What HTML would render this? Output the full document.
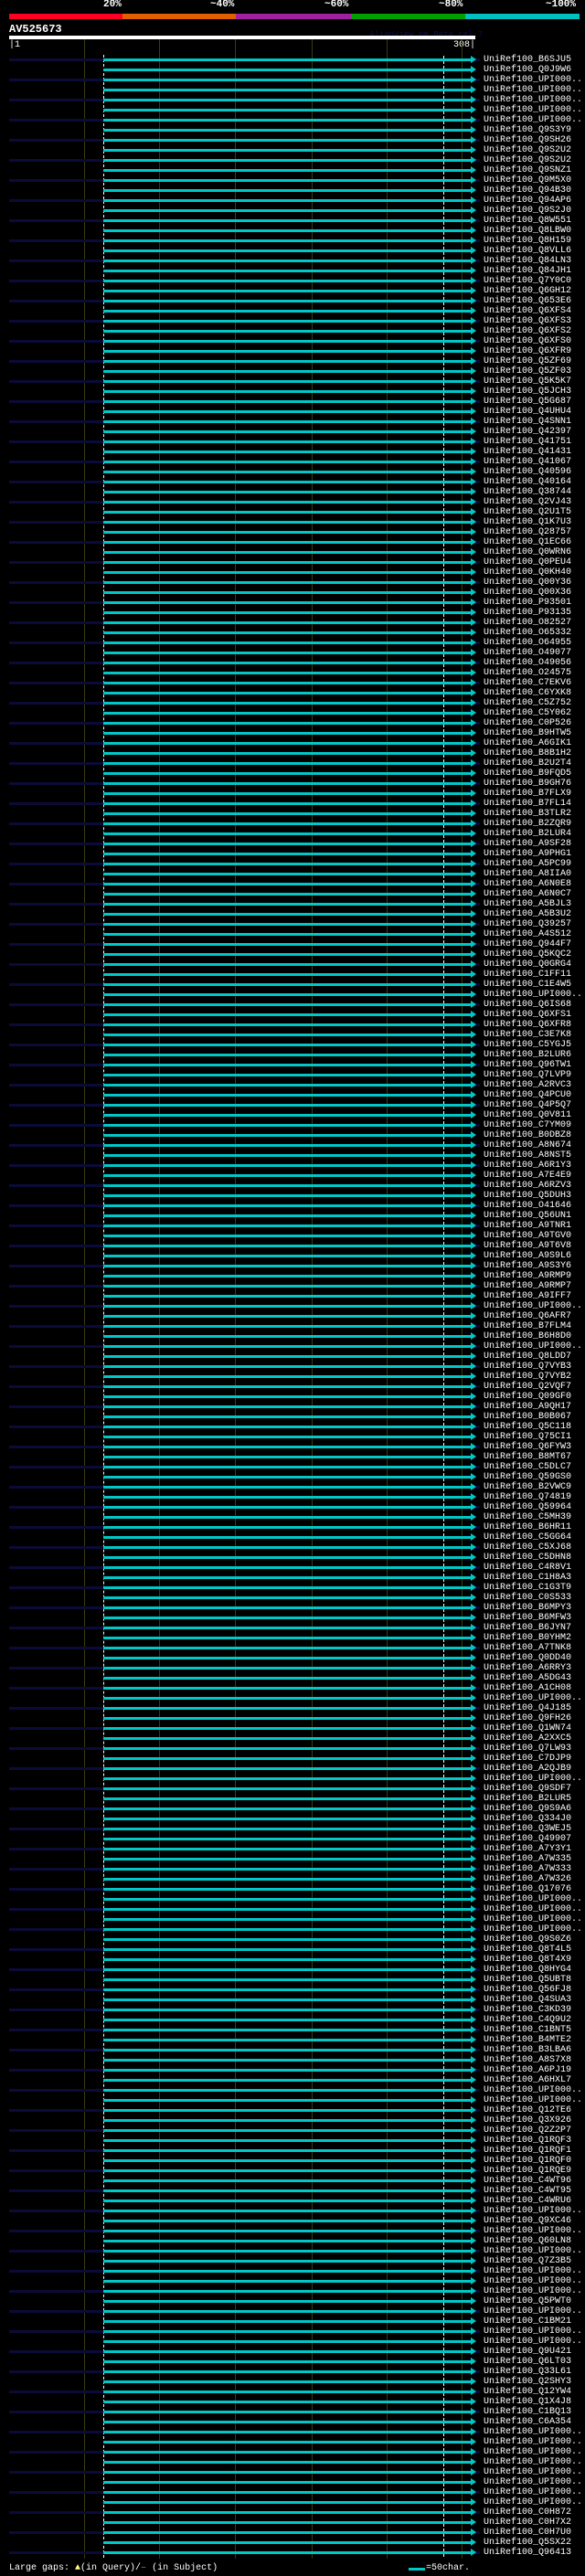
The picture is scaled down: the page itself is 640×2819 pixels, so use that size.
<!DOCTYPE html>
<html><head><meta charset="utf-8"><style>
*{margin:0;padding:0}
body{width:640px;height:2819px;background:#000;position:relative;overflow:hidden;font-family:"Liberation Mono","DejaVu Sans Mono",monospace;color:#fff}
.a{position:absolute}
.g{position:absolute;top:43px;height:2757px;width:1px;background:#3a3a12}
.pc{position:absolute;top:0;font-size:11px;font-weight:bold;line-height:11px}
#rows{position:absolute;left:0;top:60px;width:640px}
.r{height:11px;line-height:11px;font-size:10px;padding-left:529px;position:relative;white-space:nowrap;
background:linear-gradient(#fff,#fff) 485px 1px/1px 9px no-repeat}
.r.n{background:linear-gradient(#fff,#fff) 485px 1px/1px 9px no-repeat,linear-gradient(#0b0b38,#0b0b38) 10px 4px/103px 3px no-repeat,linear-gradient(#0b0b38,#0b0b38) 517px 4px/8px 3px no-repeat}
.r::before{content:"";position:absolute;left:113px;top:4px;width:402px;height:3px;background:#00c8c8}
.r::after{content:"";position:absolute;left:515px;top:1px;border-left:6px solid #00c8c8;border-top:4.5px solid transparent;border-bottom:4.5px solid transparent}
</style></head><body>
<div class="pc" style="left:113px">20%</div>
<div class="pc" style="left:230px">~40%</div>
<div class="pc" style="left:355px">~60%</div>
<div class="pc" style="left:480px">~80%</div>
<div class="pc" style="left:597px">~100%</div>
<div class="a" style="left:10px;top:15px;width:124px;height:6px;background:#ff0020"></div>
<div class="a" style="left:134px;top:15px;width:124px;height:6px;background:#e06000"></div>
<div class="a" style="left:258px;top:15px;width:126px;height:6px;background:#a020a0"></div>
<div class="a" style="left:384px;top:15px;width:125px;height:6px;background:#00a000"></div>
<div class="a" style="left:509px;top:15px;width:125px;height:6px;background:#00c0c0"></div>
<div class="a" style="left:10px;top:27px;font-size:12px;font-weight:bold;line-height:11px">AV525673</div>
<div class="a" style="left:404px;top:33px;font-size:9px;line-height:10px;color:#101040">AlignView.pm Beta rel.7</div>
<div class="a" style="left:10px;top:39px;width:510px;height:4px;background:#fff"></div>
<div class="a" style="left:10px;top:45px;font-size:10px;line-height:9px">|1</div>
<div class="a" style="left:496px;top:45px;font-size:10px;line-height:9px">308|</div>
<div class="g" style="left:92px"></div><div class="g" style="left:174px"></div><div class="g" style="left:257px"></div><div class="g" style="left:341px"></div><div class="g" style="left:423px"></div><div class="g" style="left:505px"></div>
<div class="a" style="left:113px;top:60px;height:2739px;border-left:1px dashed #fff"></div>
<div id="rows">
<div class="r n">UniRef100_B6SJU5</div><div class="r">UniRef100_Q0J9W6</div><div class="r n">UniRef100_UPI000..</div><div class="r">UniRef100_UPI000..</div><div class="r n">UniRef100_UPI000..</div><div class="r">UniRef100_UPI000..</div><div class="r n">UniRef100_UPI000..</div><div class="r">UniRef100_Q9S3Y9</div><div class="r n">UniRef100_Q9SH26</div><div class="r">UniRef100_Q9S2U2</div>
<div class="r n">UniRef100_Q9S2U2</div><div class="r">UniRef100_Q9SNZ1</div><div class="r n">UniRef100_Q9M5X0</div><div class="r">UniRef100_Q94B30</div><div class="r n">UniRef100_Q94AP6</div><div class="r">UniRef100_Q9S2J0</div><div class="r n">UniRef100_Q8W551</div><div class="r">UniRef100_Q8LBW0</div><div class="r n">UniRef100_Q8H159</div><div class="r">UniRef100_Q8VLL6</div>
<div class="r n">UniRef100_Q84LN3</div><div class="r">UniRef100_Q84JH1</div><div class="r n">UniRef100_Q7Y0C0</div><div class="r">UniRef100_Q6GH12</div><div class="r n">UniRef100_Q653E6</div><div class="r">UniRef100_Q6XFS4</div><div class="r n">UniRef100_Q6XFS3</div><div class="r">UniRef100_Q6XFS2</div><div class="r n">UniRef100_Q6XFS0</div><div class="r">UniRef100_Q6XFR9</div>
<div class="r n">UniRef100_Q5ZF69</div><div class="r">UniRef100_Q5ZF03</div><div class="r n">UniRef100_Q5K5K7</div><div class="r">UniRef100_Q5JCH3</div><div class="r n">UniRef100_Q5G687</div><div class="r">UniRef100_Q4UHU4</div><div class="r n">UniRef100_Q4SNN1</div><div class="r">UniRef100_Q42397</div><div class="r n">UniRef100_Q41751</div><div class="r">UniRef100_Q41431</div>
<div class="r n">UniRef100_Q41067</div><div class="r">UniRef100_Q40596</div><div class="r n">UniRef100_Q40164</div><div class="r">UniRef100_Q38744</div><div class="r n">UniRef100_Q2VJ43</div><div class="r">UniRef100_Q2U1T5</div><div class="r n">UniRef100_Q1K7U3</div><div class="r">UniRef100_Q28757</div><div class="r n">UniRef100_Q1EC66</div><div class="r">UniRef100_Q0WRN6</div>
<div class="r n">UniRef100_Q0PEU4</div><div class="r">UniRef100_Q0KH40</div><div class="r n">UniRef100_Q00Y36</div><div class="r">UniRef100_Q00X36</div><div class="r n">UniRef100_P93501</div><div class="r">UniRef100_P93135</div><div class="r n">UniRef100_O82527</div><div class="r">UniRef100_O65332</div><div class="r n">UniRef100_O64955</div><div class="r">UniRef100_O49077</div>
<div class="r n">UniRef100_O49056</div><div class="r">UniRef100_O24575</div><div class="r n">UniRef100_C7EKV6</div><div class="r">UniRef100_C6YXK8</div><div class="r n">UniRef100_C5Z752</div><div class="r">UniRef100_C5Y062</div><div class="r n">UniRef100_C0P526</div><div class="r">UniRef100_B9HTW5</div><div class="r n">UniRef100_A6GIK1</div><div class="r">UniRef100_B8B1H2</div>
<div class="r n">UniRef100_B2U2T4</div><div class="r">UniRef100_B9FQD5</div><div class="r n">UniRef100_B9GH76</div><div class="r">UniRef100_B7FLX9</div><div class="r n">UniRef100_B7FL14</div><div class="r">UniRef100_B3TLR2</div><div class="r n">UniRef100_B2ZQR9</div><div class="r">UniRef100_B2LUR4</div><div class="r n">UniRef100_A9SF28</div><div class="r">UniRef100_A9PHG1</div>
<div class="r n">UniRef100_A5PC99</div><div class="r">UniRef100_A8IIA0</div><div class="r n">UniRef100_A6N0E8</div><div class="r">UniRef100_A6N0C7</div><div class="r n">UniRef100_A5BJL3</div><div class="r">UniRef100_A5B3U2</div><div class="r n">UniRef100_Q39257</div><div class="r">UniRef100_A4S512</div><div class="r n">UniRef100_Q944F7</div><div class="r">UniRef100_Q5KQC2</div>
<div class="r n">UniRef100_Q0GRG4</div><div class="r">UniRef100_C1FF11</div><div class="r n">UniRef100_C1E4W5</div><div class="r">UniRef100_UPI000..</div><div class="r n">UniRef100_Q6IS68</div><div class="r">UniRef100_Q6XFS1</div><div class="r n">UniRef100_Q6XFR8</div><div class="r">UniRef100_C3E7K8</div><div class="r n">UniRef100_C5YGJ5</div><div class="r">UniRef100_B2LUR6</div>
<div class="r n">UniRef100_Q96TW1</div><div class="r">UniRef100_Q7LVP9</div><div class="r n">UniRef100_A2RVC3</div><div class="r">UniRef100_Q4PCU0</div><div class="r n">UniRef100_Q4P5Q7</div><div class="r">UniRef100_Q0V811</div><div class="r n">UniRef100_C7YM09</div><div class="r">UniRef100_B0DBZ8</div><div class="r n">UniRef100_A8N674</div><div class="r">UniRef100_A8NST5</div>
<div class="r n">UniRef100_A6R1Y3</div><div class="r">UniRef100_A7E4E9</div><div class="r n">UniRef100_A6RZV3</div><div class="r">UniRef100_Q5DUH3</div><div class="r n">UniRef100_O41646</div><div class="r">UniRef100_Q56UN1</div><div class="r n">UniRef100_A9TNR1</div><div class="r">UniRef100_A9TGV0</div><div class="r n">UniRef100_A9T6V8</div><div class="r">UniRef100_A9S9L6</div>
<div class="r n">UniRef100_A9S3Y6</div><div class="r">UniRef100_A9RMP9</div><div class="r n">UniRef100_A9RMP7</div><div class="r">UniRef100_A9IFF7</div><div class="r n">UniRef100_UPI000..</div><div class="r">UniRef100_Q6AFR7</div><div class="r n">UniRef100_B7FLM4</div><div class="r">UniRef100_B6H8D0</div><div class="r n">UniRef100_UPI000..</div><div class="r">UniRef100_Q8LDD7</div>
<div class="r n">UniRef100_Q7VYB3</div><div class="r">UniRef100_Q7VYB2</div><div class="r n">UniRef100_Q2VQF7</div><div class="r">UniRef100_Q09GF0</div><div class="r n">UniRef100_A9QH17</div><div class="r">UniRef100_B0B067</div><div class="r n">UniRef100_Q5C118</div><div class="r">UniRef100_Q75CI1</div><div class="r n">UniRef100_Q6FYW3</div><div class="r">UniRef100_B8MT67</div>
<div class="r n">UniRef100_C5DLC7</div><div class="r">UniRef100_Q59GS0</div><div class="r n">UniRef100_B2VWC9</div><div class="r">UniRef100_Q74819</div><div class="r n">UniRef100_Q59964</div><div class="r">UniRef100_C5MH39</div><div class="r n">UniRef100_B6HR11</div><div class="r">UniRef100_C5GG64</div><div class="r n">UniRef100_C5XJ68</div><div class="r">UniRef100_C5DHN8</div>
<div class="r n">UniRef100_C4R8V1</div><div class="r">UniRef100_C1H8A3</div><div class="r n">UniRef100_C1G3T9</div><div class="r">UniRef100_C0S533</div><div class="r n">UniRef100_B6MPY3</div><div class="r">UniRef100_B6MFW3</div><div class="r n">UniRef100_B6JYN7</div><div class="r">UniRef100_B0YHM2</div><div class="r n">UniRef100_A7TNK8</div><div class="r">UniRef100_Q0DD40</div>
<div class="r n">UniRef100_A6RRY3</div><div class="r">UniRef100_A5DG43</div><div class="r n">UniRef100_A1CH08</div><div class="r">UniRef100_UPI000..</div><div class="r n">UniRef100_Q4J185</div><div class="r">UniRef100_Q9FH26</div><div class="r n">UniRef100_Q1WN74</div><div class="r">UniRef100_A2XXC5</div><div class="r n">UniRef100_Q7LW93</div><div class="r">UniRef100_C7DJP9</div>
<div class="r n">UniRef100_A2QJB9</div><div class="r">UniRef100_UPI000..</div><div class="r n">UniRef100_Q9SDF7</div><div class="r">UniRef100_B2LUR5</div><div class="r n">UniRef100_Q9S9A6</div><div class="r">UniRef100_Q334J0</div><div class="r n">UniRef100_Q3WEJ5</div><div class="r">UniRef100_Q49907</div><div class="r n">UniRef100_A7Y3Y1</div><div class="r">UniRef100_A7W335</div>
<div class="r n">UniRef100_A7W333</div><div class="r">UniRef100_A7W326</div><div class="r n">UniRef100_Q17076</div><div class="r">UniRef100_UPI000..</div><div class="r n">UniRef100_UPI000..</div><div class="r">UniRef100_UPI000..</div><div class="r n">UniRef100_UPI000..</div><div class="r">UniRef100_Q9S0Z6</div><div class="r n">UniRef100_Q8T4L5</div><div class="r">UniRef100_Q8T4X9</div>
<div class="r n">UniRef100_Q8HYG4</div><div class="r">UniRef100_Q5UBT8</div><div class="r n">UniRef100_Q56FJ8</div><div class="r">UniRef100_Q4SUA3</div><div class="r n">UniRef100_C3KD39</div><div class="r">UniRef100_C4Q9U2</div><div class="r n">UniRef100_C1BNT5</div><div class="r">UniRef100_B4MTE2</div><div class="r n">UniRef100_B3LBA6</div><div class="r">UniRef100_A8S7X8</div>
<div class="r n">UniRef100_A6PJ19</div><div class="r">UniRef100_A6HXL7</div><div class="r n">UniRef100_UPI000..</div><div class="r">UniRef100_UPI000..</div><div class="r n">UniRef100_Q12TE6</div><div class="r">UniRef100_Q3X926</div><div class="r n">UniRef100_Q2Z2P7</div><div class="r">UniRef100_Q1RQF3</div><div class="r n">UniRef100_Q1RQF1</div><div class="r">UniRef100_Q1RQF0</div>
<div class="r n">UniRef100_Q1RQE9</div><div class="r">UniRef100_C4WT96</div><div class="r n">UniRef100_C4WT95</div><div class="r">UniRef100_C4WRU6</div><div class="r n">UniRef100_UPI000..</div><div class="r">UniRef100_Q9XC46</div><div class="r n">UniRef100_UPI000..</div><div class="r">UniRef100_Q60LN8</div><div class="r n">UniRef100_UPI000..</div><div class="r">UniRef100_Q7Z3B5</div>
<div class="r n">UniRef100_UPI000..</div><div class="r">UniRef100_UPI000..</div><div class="r n">UniRef100_UPI000..</div><div class="r">UniRef100_Q5PWT0</div><div class="r n">UniRef100_UPI000..</div><div class="r">UniRef100_C1BM21</div><div class="r n">UniRef100_UPI000..</div><div class="r">UniRef100_UPI000..</div><div class="r n">UniRef100_Q9U421</div><div class="r">UniRef100_Q6LT03</div>
<div class="r n">UniRef100_Q33L61</div><div class="r">UniRef100_Q2SHY3</div><div class="r n">UniRef100_Q12YW4</div><div class="r">UniRef100_Q1X4J8</div><div class="r n">UniRef100_C1BQ13</div><div class="r">UniRef100_C6A354</div><div class="r n">UniRef100_UPI000..</div><div class="r">UniRef100_UPI000..</div><div class="r n">UniRef100_UPI000..</div><div class="r">UniRef100_UPI000..</div>
<div class="r n">UniRef100_UPI000..</div><div class="r">UniRef100_UPI000..</div><div class="r n">UniRef100_UPI000..</div><div class="r">UniRef100_UPI000..</div>
<div class="r n">UniRef100_C0H872</div><div class="r">UniRef100_C0H7X2</div><div class="r n">UniRef100_C0H7U0</div><div class="r">UniRef100_Q5SX22</div><div class="r n">UniRef100_Q96413</div>
</div>
<div class="a" style="left:10px;top:2805px;font-size:10px;line-height:12px;white-space:nowrap">Large gaps: <span style="color:#ffff80">▲</span>(in Query)/<span style="color:#00c8c8">–</span> (in Subject)</div>
<div class="a" style="left:447px;top:2810px;width:18px;height:3px;background:#00c8c8"></div>
<div class="a" style="left:466px;top:2805px;font-size:10px;line-height:12px">=50char.</div>
</body></html>
